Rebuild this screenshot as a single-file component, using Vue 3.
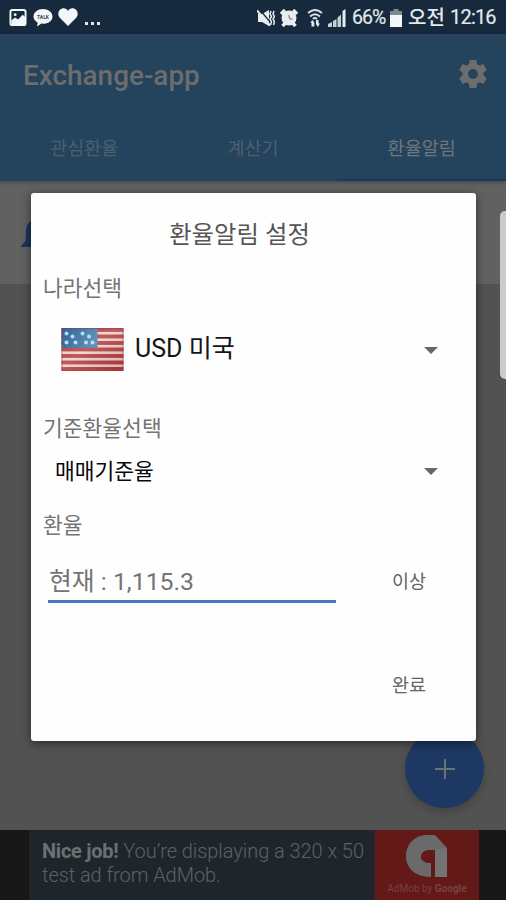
<script setup>
const tabs = ['관심환율', '계산기', '환율알림']
const stars = [[5, 5.5], [11, 8.5], [21, 5.5], [27.5, 8.5], [5, 14.5], [14, 14.5], [24.5, 14.5], [31, 14.5]]
const stripes = Array.from({ length: 7 }, (_, i) => i * 6.5)
</script>

<template>
  <div class="screen">
    <header class="status">
      <div class="status-left">
        <svg class="ic-photo" viewBox="0 0 18 18"><rect x="1" y="1" width="16" height="16" rx="2" fill="none" stroke="#f4f8fa" stroke-width="2" /><circle cx="6" cy="6" r="1.5" fill="#f4f8fa" /><path d="M2 12l4-3 3 2 5-5 3 3v7H2z" fill="#f4f8fa" /></svg>
        <svg class="ic-talk" viewBox="0 0 20 19"><path d="M10 1C4.8 1 .5 4.3.5 8.400c0 2.700 1.800 4.900 4.200 6.200L4 18.400l4.400-2.800c5.800.6 11.100-2.300 11.100-7.200C19.500 4.300 15.200 1 10 1z" fill="#f4f8fa" /><text x="10" y="10.600" text-anchor="middle" class="talk-text">TALK</text></svg>
        <svg class="ic-heart" viewBox="0 0 20 18"><path d="M10 18L2 10C-.8 7 0 2 3.500.700 6.200-.300 8.800.600 10 3c1.200-2.400 3.800-3.300 6.500-2.300C20 2 20.800 7 18 10z" fill="#f4f8fa" /></svg>
        <span class="dots"><i></i><i></i><i></i></span>
      </div>
      <div class="status-right">
        <svg class="ic-mute" viewBox="0 0 18 18"><path d="M1 5h4l7-4v16l-7-4H1z" fill="#e8edf0" /><path d="M3 1l11 13" stroke="#17293c" stroke-width="1.200" /><path d="M0 1.500l13 15" stroke="#e8edf0" stroke-width="2" /><path d="M14 2l-1 3 1.500 2.500-1.500 2.500 1.500 2.500-1 3.500M17 2l-1 3 1.500 2.500-1.500 2.500 1.500 2.500-1 3.500" fill="none" stroke="#e8edf0" stroke-width="1.500" /></svg>
        <svg class="ic-alarm" viewBox="0 0 18 18"><circle cx="9" cy="9" r="7.500" fill="#e8edf0" /><path d="M1 5l4-4M17 5l-4-4M2.500 17l3-3M15.500 17l-3-3" stroke="#e8edf0" stroke-width="3.500" /><path d="M8.500 6l1.500 4h2.500" fill="none" stroke="#8b98a3" stroke-width="1.500" /></svg>
        <svg class="ic-wifi" viewBox="0 0 16 18"><path d="M1 4q7-6 14 0M3 7.500q5-4.500 10 0M6 10q2-2 4 0" fill="none" stroke="#d6dfe4" stroke-width="2" /><path d="M3.200 13.500l2.300-2.500 1.800 2.500v4H4.500v-4zM9 11h2.500v3.500H13L10.800 18 9 15z" fill="#e8edf0" /></svg>
        <svg class="ic-signal" viewBox="0 0 18 18"><path d="M0 18v-3l4-2v5zM5 18v-6l3.500-2v8zM9.500 18V8.500l3.500-3V18z" fill="#c6d0d7" /><path d="M14.500 18V2L17.500 0v18z" fill="#e8edf0" /></svg>
        <span class="percent">66%</span>
        <svg class="ic-battery" viewBox="0 0 12 18"><path d="M3.500 0h5v2H12v16H0V2h3.500z" fill="#7d8990" /><path d="M0 6h12v12H0z" fill="#f4f8fa" /></svg>
        <span class="ampm">오전</span>
        <span class="clock">12:16</span>
      </div>
    </header>

    <div class="appbar">
      <div class="titlebar">
        <h1>Exchange-app</h1>
        <svg class="gear" viewBox="2 2 20 20"><path d="M19.430 12.980c.040-.320.070-.640.070-.980s-.030-.660-.070-.980l2.110-1.650c.190-.150.240-.420.120-.640l-2-3.460c-.120-.220-.390-.300-.610-.220l-2.490 1c-.520-.400-1.080-.730-1.690-.980l-.380-2.650C14.460 2.180 14.250 2 14 2h-4c-.250 0-.460.180-.490.420l-.380 2.650c-.610.250-1.170.590-1.690.980l-2.490-1c-.230-.090-.490 0-.610.220l-2 3.460c-.130.220-.070.490.120.640l2.110 1.650c-.040.320-.070.650-.070.980s.030.660.070.980l-2.110 1.650c-.190.150-.240.420-.120.640l2 3.460c.120.220.390.300.610.220l2.490-1c.520.400 1.080.730 1.690.980l.380 2.650c.030.240.240.420.490.420h4c.250 0 .460-.180.490-.420l.380-2.650c.610-.250 1.170-.590 1.690-.980l2.490 1c.230.090.490 0 .610-.220l2-3.460c.120-.220.070-.490-.120-.640zM12 15.500a3.500 3.500 0 1 1 0-7 3.500 3.500 0 0 1 0 7z" fill="#6c6d6e" /></svg>
      </div>
      <nav class="tabs">
        <div v-for="(t, i) in tabs" :key="t" class="tab" :class="{ active: i === 2 }">{{ t }}</div>
      </nav>
    </div>

    <section class="alert-row">
      <svg class="bell" viewBox="0 0 32 32"><path d="M16 0a3 3 0 0 0-3 2C8 3 6 6 5 12L4.500 23l-4.500 5v1h32v-1l-4.500-5L27 12C26 6 24 3 19 2a3 3 0 0 0-3-2z" fill="#17345f" /></svg>
    </section>
    <main class="body"></main>

    <footer class="ad">
      <div class="ad-copy"><p><b>Nice job!</b> You’re displaying a 320 x 50</p><p>test ad from AdMob.</p></div>
      <div class="ad-logo">
        <svg class="admob" viewBox="0 0 42 43"><path d="M25 42C9 42 0 33 0 21 0 9 9 0 21 0h8l12 13v2H23c-5 0-8 3-8 7 0 4 4 6 10 6z" fill="#6b6a6a" /><path d="M29 15L41 13v29H29z" fill="#747373" /></svg>
        <span>AdMob by <b>Google</b></span>
      </div>
    </footer>

    <div class="scroll-handle"></div>
    <button class="fab" aria-label="추가"><svg viewBox="0 0 22 22"><path d="M11 1v20M1 11h20" stroke="#69717b" stroke-width="2" /></svg></button>

    <div class="dialog">
      <h2>환율알림 설정</h2>
      <div class="label country-label">나라선택</div>
      <div class="select country">
        <svg class="flag" viewBox="0 0 62 43">
          <defs>
            <linearGradient id="shine" x1="0" y1="0" x2="1" y2="1"><stop offset="0" stop-color="#fff" stop-opacity="0" /><stop offset=".45" stop-color="#fff" stop-opacity=".16" /><stop offset="1" stop-color="#500" stop-opacity=".14" /></linearGradient>
            <linearGradient id="canton" x1="0" x2="1"><stop offset="0" stop-color="#315f94" /><stop offset="1" stop-color="#477fad" /></linearGradient>
          </defs>
          <rect width="62" height="43" fill="#ecd0ce" />
          <rect v-for="y in stripes" :key="y" :y="y" width="62" height="3.900" fill="#b23c3c" />
          <rect width="36" height="20" fill="url(#canton)" />
          <circle v-for="s in stars" :key="s.join()" :cx="s[0]" :cy="s[1]" r="2" fill="#a8dff5" />
          <rect width="62" height="43" fill="url(#shine)" />
          <rect x=".5" y=".5" width="61" height="42" fill="none" stroke="#923e43" stroke-opacity=".55" />
        </svg>
        <span>USD 미국</span><i class="caret"></i>
      </div>
      <div class="label">기준환율선택</div>
      <div class="select basis"><span>매매기준율</span><i class="caret"></i></div>
      <div class="label rate-label">환율</div>
      <div class="rate-row"><div class="input">현재 : 1,115.3</div><div class="action">이상</div></div>
      <div class="done"><div class="action">완료</div></div>
    </div>
  </div>
</template>

<style>
body { margin: 0; }
</style>
<style scoped>
* { box-sizing: border-box; margin: 0; padding: 0; }
.screen { position: relative; width: 506px; height: 900px; display: flex; flex-direction: column; overflow: hidden; background: #525252; font-family: Roboto, "Noto Sans CJK KR", sans-serif; white-space: nowrap; }
.status { height: 34px; background: #17293c; display: flex; justify-content: space-between; color: #e2e8eb; flex: none; }
.status-left { display: flex; align-items: flex-start; padding: 9px 0 0 9px; }
.ic-photo { width: 18px; height: 17px; }
.ic-talk { width: 20px; height: 19px; margin-left: 6px; margin-top: -1px; }
.talk-text { font: bold 5px Roboto, sans-serif; fill: #34424e; }
.ic-heart { width: 20px; height: 18px; margin-left: 5px; margin-top: -1px; }
.dots { display: flex; gap: 3px; margin: 13px 0 0 7px; }
.dots i { width: 3px; height: 3px; background: #e2e8eb; }
.status-right { display: flex; align-items: center; height: 35px; padding-right: 10px; line-height: 35px; }
.ic-mute { width: 18px; height: 18px; }
.ic-alarm { width: 18px; height: 18px; margin-left: 5px; }
.ic-wifi { width: 16px; height: 18px; margin-left: 9px; }
.ic-signal { width: 18px; height: 18px; margin-left: 5px; }
.percent { width: 34px; margin-left: 6px; font-size: 19.500px; letter-spacing: -1px; -webkit-text-stroke: .2px #e2e8eb; }
.ic-battery { width: 12px; height: 18px; margin-left: 4px; }
.ampm { width: 37px; margin: 2px 0 0 6px; font-size: 20px; font-weight: 500; }
.clock { width: 46px; margin-left: 5px; font-size: 20px; letter-spacing: -.8px; -webkit-text-stroke: .2px #e2e8eb; }
.appbar { height: 147px; flex: none; background: #24435c; display: flex; flex-direction: column; box-shadow: 0 1px 4px rgba(0,0,0,.35); z-index: 1; }
.titlebar { height: 80px; display: flex; align-items: center; justify-content: space-between; padding: 0 19px 0 23px; }
h1 { font-size: 27.900px; line-height: 32px; font-weight: 500; color: #6c6d6e; margin-top: 3px; }
.gear { width: 28px; height: 28px; margin-top: -1px; }
.tabs { flex: 1; display: grid; grid-template-columns: repeat(3, 1fr); }
.tab { display: flex; justify-content: center; align-items: center; font-size: 18.500px; color: #4b6070; border-bottom: 2px solid transparent; }
.tab.active { color: #6d777d; border-bottom-color: #1d3763; }
.alert-row { height: 103px; flex: none; background: #616161; padding: 36px 0 0 21px; }
.bell { width: 32px; height: 34px; display: block; }
.body { flex: 1; }
.ad { height: 70px; flex: none; background: #171717; display: flex; padding: 0 27px 0 29px; }
.ad-copy { flex: 1; background: #1f262b; padding: 10px 0 0 13px; font-size: 20px; line-height: 23.500px; letter-spacing: -.06px; font-weight: 300; color: #596268; }
.ad-copy b { font-weight: 700; letter-spacing: -.25px; color: #6d7072; }
.ad-logo { width: 104px; background: #621918; display: flex; flex-direction: column; align-items: center; padding-top: 5px; }
.admob { width: 42px; height: 43px; }
.ad-logo span { font-size: 10px; line-height: 14px; color: #7a4141; margin-top: 4px; }
.scroll-handle { position: absolute; left: 500px; top: 211px; width: 12px; height: 168px; background: #cbcbcb; border-radius: 5px; z-index: 2; }
.fab { position: absolute; left: 405px; top: 729px; width: 79px; height: 79px; border: 0; border-radius: 50%; background: #1d3862; box-shadow: 0 4px 8px rgba(0,0,0,.2); display: flex; align-items: center; justify-content: center; }
.fab svg { width: 22px; height: 22px; }
.dialog { position: absolute; z-index: 3; left: 31px; top: 193px; width: 445px; height: 548px; background: #fefefe; border-radius: 3px; box-shadow: 0 2px 10px rgba(0,0,0,.5); display: flex; flex-direction: column; padding-left: 12px; }
h2 { height: 40px; margin-top: 22px; line-height: 40px; font-size: 24.400px; font-weight: 400; color: #565656; text-align: center; padding-right: 40px; }
.label { height: 36px; line-height: 36px; font-size: 21.500px; color: #747474; }
.country-label { margin-top: 16px; }
.select { display: flex; align-items: center; color: #151515; }
.country { height: 70px; margin: 7px 38px 27px 18px; font-size: 25px; }
.country span { margin-bottom: 7px; }
.flag { width: 63px; height: 43px; margin-right: 11px; }
.caret { width: 0; height: 0; border: 7px solid transparent; border-top-color: #686868; border-bottom: 0; margin-left: auto; }
.basis { height: 42px; margin: 1px 38px 0 12px; font-size: 21.500px; color: #080808; }
.country .caret { margin-top: 3px; }
.basis .caret { margin-top: 4px; }
.rate-label { margin-top: 18px; }
.rate-row { display: flex; height: 60px; margin-top: 5px; padding-left: 5px; }
.input { width: 288px; height: 54px; border-bottom: 3px solid #4479c5; font-size: 24.800px; line-height: 66px; color: #747474; padding-left: 1px; }
.action { font-size: 18.500px; color: #646464; line-height: 60px; }
.rate-row .action { margin-left: 56px; line-height: 66px; }
.done { height: 60px; margin-top: 47px; padding-left: 349px; }
</style>
